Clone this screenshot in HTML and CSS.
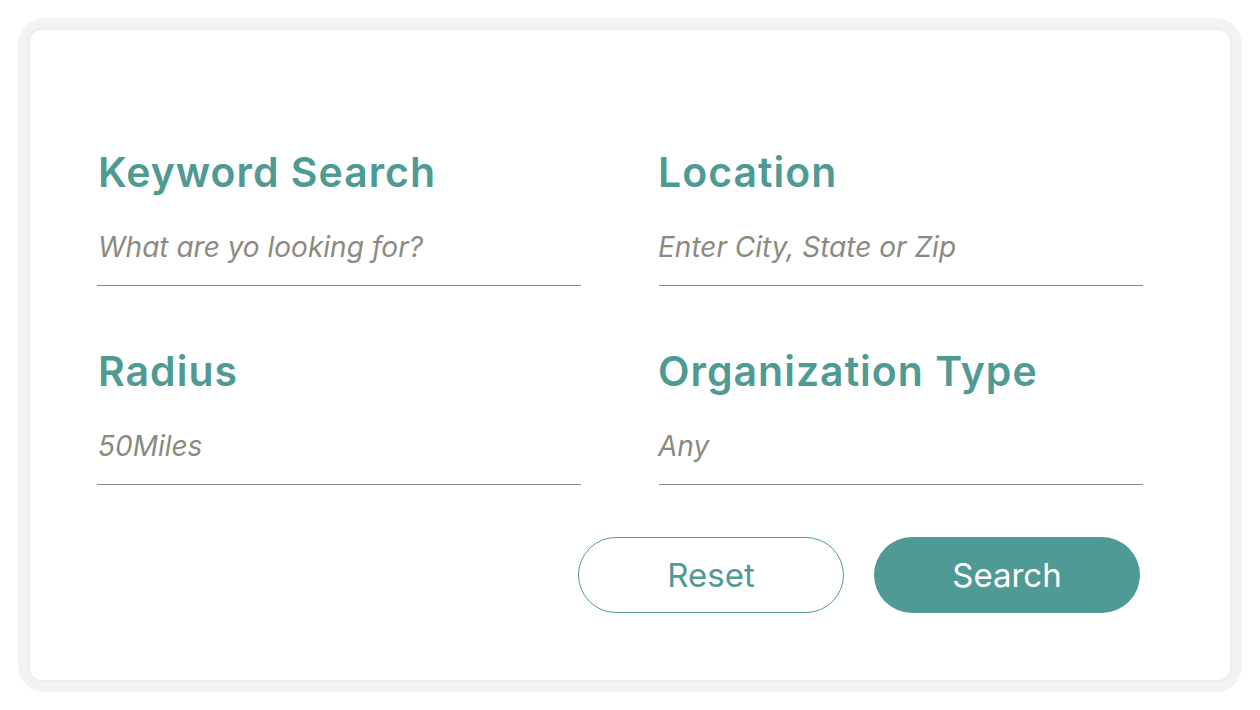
FILE: index.html
```html
<!DOCTYPE html>
<html lang="en">
<head>
<meta charset="utf-8">
<title>Search</title>
<link rel="stylesheet" href="styles.css">
</head>
<body>
<div class="frame">
  <form class="card">
    <div class="fields">
      <div class="field">
        <label class="label">Keyword Search</label>
        <div class="input">What are yo looking for?</div>
      </div>
      <div class="field">
        <label class="label">Location</label>
        <div class="input">Enter City, State or Zip</div>
      </div>
      <div class="field">
        <label class="label">Radius</label>
        <div class="input">50Miles</div>
      </div>
      <div class="field">
        <label class="label">Organization Type</label>
        <div class="input">Any</div>
      </div>
    </div>
    <div class="actions">
      <button type="button" class="btn btn-outline">Reset</button>
      <button type="button" class="btn btn-solid">Search</button>
    </div>
  </form>
</div>
</body>
</html>
```

FILE: styles.css
```css
html, body {
  margin: 0;
  padding: 0;
  background: #ffffff;
}
body {
  font-family: "Inter", "Noto Sans", "Liberation Sans", sans-serif;
}
.frame {
  margin: 18px;
  padding: 12px;
  background: #f3f3f3;
  border-radius: 26px;
  height: 650px;
}
.card {
  box-sizing: border-box;
  height: 650px;
  background: #ffffff;
  border-radius: 12px;
  box-shadow: 0 0 4px rgba(0, 0, 0, 0.07);
  padding: 117px 87px 0 67px;
}
.fields {
  display: grid;
  grid-template-columns: 484px 484px;
  column-gap: 78px;
  row-gap: 60px;
}
.field {
  display: flex;
  flex-direction: column;
}
.label {
  display: block;
  font-size: 41px;
  line-height: 50px;
  font-weight: 600;
  letter-spacing: 1px;
  color: #4f9a93;
  padding-left: 1px;
}
.field:nth-child(even) .label {
  margin-left: -2px;
}
.input {
  margin-top: 30px;
  font-size: 28px;
  line-height: 40px;
  font-style: italic;
  color: #8c8a80;
  padding: 0 0 18px 1px;
  border-bottom: 1px solid #8a8a8a;
}
.field:nth-child(even) .input {
  text-indent: -2px;
}
.actions {
  display: flex;
  justify-content: flex-end;
  gap: 30px;
  margin-top: 52px;
  padding-right: 3px;
}
.btn {
  box-sizing: border-box;
  width: 266px;
  height: 76px;
  border-radius: 38px;
  font-family: inherit;
  font-size: 33px;
  font-weight: 400;
  cursor: pointer;
}
.btn-outline {
  background: #ffffff;
  color: #4f9a93;
  border: 1px solid #4f9a93;
}
.btn-solid {
  background: #4f9a94;
  color: #ffffff;
  border: none;
}
```
